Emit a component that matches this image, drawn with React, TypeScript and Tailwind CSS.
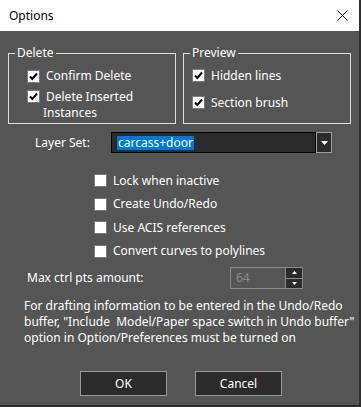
import React from "react";

const FONT = { fontFamily: '"Segoe UI", "Noto Sans", "Liberation Sans", sans-serif' };

function Check({ checked }: { checked?: boolean }) {
  return (
    <span className="w-[13px] h-[13px] shrink-0 bg-white border border-[#7a7a7a] flex items-center justify-center">
      {checked && (
        <svg width="9" height="9" viewBox="0 0 9 9">
          <path d="M1 4.5 L3.3 7 L8 1.5" fill="none" stroke="#000" strokeWidth="2" />
        </svg>
      )}
    </span>
  );
}

function Group({ title, children, className }: { title: string; children: React.ReactNode; className?: string }) {
  return (
    <fieldset className={"border border-[#dedede] h-[79px] " + (className ?? "")}>
      <legend className="ml-[6px] px-[2px] leading-[16px] text-white">{title}</legend>
      {children}
    </fieldset>
  );
}

export default function App() {
  return (
    <div className="w-[361px] h-[407px] bg-[#2e2e2e] text-[12px]" style={FONT}>
      <div className="w-[359px] h-[405px] bg-[#555555] flex flex-col">
        {/* title bar */}
        <div className="h-[31px] bg-white flex items-center justify-between pl-[9px] pr-[11px]">
          <span className="text-black text-[12px]">Options</span>
          <svg width="11" height="11" viewBox="0 0 11 11">
            <path d="M0.5 0.5 L10.5 10.5 M10.5 0.5 L0.5 10.5" stroke="#000" strokeWidth="1" />
          </svg>
        </div>

        {/* groups */}
        <div className="flex gap-[7px] px-[8px] mt-[14px]">
          <Group title="Delete" className="w-[170px]">
            <div className="flex flex-col pl-[18px] pt-[7px] gap-[5px] text-white leading-[16px]">
              <div className="flex items-center gap-[6px]">
                <Check checked />
                <span>Confirm Delete</span>
              </div>
              <div className="flex items-start gap-[6px]">
                <span className="mt-[1px]"><Check checked /></span>
                <span>
                  <span className="block">Delete Inserted</span>
                  <span className="block -ml-[3px]">Instances</span>
                </span>
              </div>
            </div>
          </Group>
          <Group title="Preview" className="w-[170px]">
            <div className="flex flex-col pl-[8px] pt-[8px] gap-[14px] text-white leading-[13px]">
              <div className="flex items-center gap-[6px]">
                <Check checked />
                <span>Hidden lines</span>
              </div>
              <div className="flex items-center gap-[6px]">
                <Check checked />
                <span>Section brush</span>
              </div>
            </div>
          </Group>
        </div>

        {/* layer set */}
        <div className="flex items-center mt-[8px] h-[21px]">
          <span className="w-[111px] pl-[35px] text-white">Layer Set:</span>
          <div className="w-[205px] h-[21px] bg-[#2b2b2b] border border-black flex items-center pl-[5px]">
            <span className="bg-[#0078d7] text-white leading-[14px] px-[1px]">carcass+door</span>
          </div>
          <div className="w-[16px] h-[21px] bg-[#2b2b2b] border border-[#a0a0a0] flex items-center justify-center">
            <svg width="7" height="4" viewBox="0 0 7 4">
              <path d="M0 0 H7 L3.5 4 Z" fill="#fff" />
            </svg>
          </div>
        </div>

        {/* options */}
        <div className="flex flex-col pl-[94px] mt-[21px] text-white">
          {["Lock when inactive", "Create Undo/Redo", "Use ACIS references", "Convert curves to polylines"].map((t) => (
            <div key={t} className="flex items-center gap-[6px] h-[13px] mb-[10.5px]">
              <Check />
              <span>{t}</span>
            </div>
          ))}
        </div>

        {/* max ctrl pts */}
        <div className="flex items-center h-[22px] mt-[-1px]">
          <span className="w-[230px] pl-[27px] text-white">Max ctrl pts amount:</span>
          <div className="w-[56px] h-[22px] border border-[#8a8a8a] flex items-center pl-[5px] text-[#8a8a8a]">64</div>
          <div className="flex flex-col w-[17px] h-[22px] border border-[#8a8a8a] border-l-0">
            <div className="flex-1 bg-[#2b2b2b] border-b border-[#8a8a8a] flex items-center justify-center">
              <svg width="5" height="3" viewBox="0 0 5 3"><path d="M2.5 0 L5 3 H0 Z" fill="#fff" /></svg>
            </div>
            <div className="flex-1 bg-[#2b2b2b] flex items-center justify-center">
              <svg width="5" height="3" viewBox="0 0 5 3"><path d="M0 0 H5 L2.5 3 Z" fill="#fff" /></svg>
            </div>
          </div>
        </div>

        {/* note */}
        <p className="mt-[9px] pl-[24px] pr-[10px] text-white leading-[16px] whitespace-nowrap">
          For drafting information to be entered in the Undo/Redo
          <br />
          buffer, "Include&nbsp; Model/Paper space switch in Undo buffer"
          <br />
          option in Option/Preferences must be turned on
        </p>

        {/* buttons */}
        <div className="flex gap-[28px] pl-[80px] mt-[25px]">
          <button className="w-[87px] h-[25px] bg-[#2b2b2b] border border-[#9a9a9a] text-white">OK</button>
          <button className="w-[87px] h-[25px] bg-[#2b2b2b] border border-[#9a9a9a] text-white">Cancel</button>
        </div>
      </div>
    </div>
  );
}
